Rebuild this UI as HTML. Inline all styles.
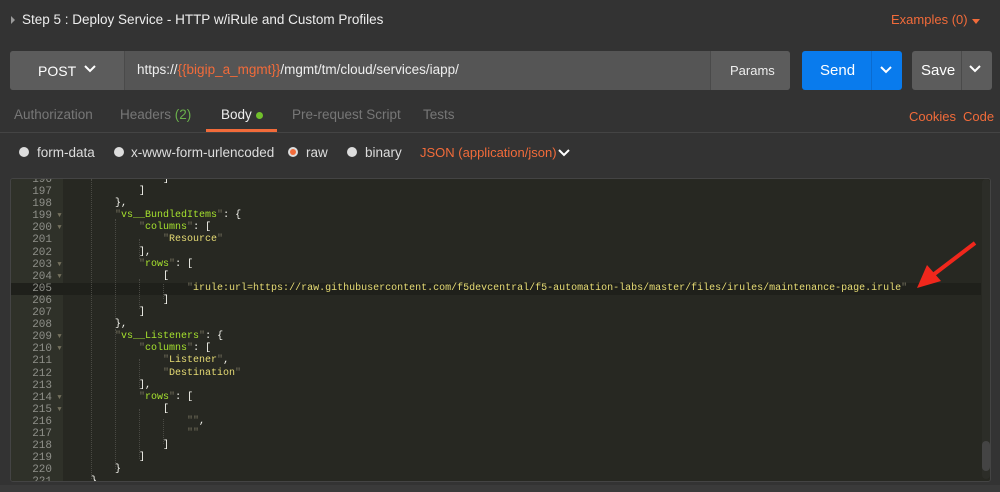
<!DOCTYPE html>
<html><head><meta charset="utf-8"><style>
*{margin:0;padding:0;box-sizing:border-box}
body{width:1000px;height:492px;background:#333;overflow:hidden;position:relative;font-family:"Liberation Sans",sans-serif;color:#fff}
.a{position:absolute}
.t{font-size:13px;white-space:nowrap}
.or{color:#f26b3a}
#ed{left:10px;top:178px;width:981px;height:304px;background:#272822;border:1px solid #444;border-radius:3px;overflow:hidden}
#gut{left:0;top:0;width:52px;height:100%;background:#2f3129}
#code{left:0;top:-5px;font-family:"Liberation Mono",monospace;font-size:10px;line-height:12.1px;white-space:pre;color:#f8f8f2}
.ln{display:inline-block;width:41px;text-align:right;color:#8f908a;font-size:11px;line-height:12.1px;vertical-align:top}
.fd{display:inline-block;width:15px;color:#75715e;font-size:7px;text-align:center;line-height:12.1px;vertical-align:top}
.k{color:#a6e22e}.s{color:#e6db74}.q{color:#75715e}
.hl{position:absolute;left:0;width:970px;height:12px;background:#1f201b}
.g{position:absolute;border-left:1px dotted #4a4a44}
</style></head><body>
<div class="a" style="left:11px;top:16px;width:0;height:0;border-top:4px solid transparent;border-bottom:4px solid transparent;border-left:4px solid #999"></div>
<div class="a t" style="left:22px;top:12px;font-size:13.5px;color:#eee">Step 5 : Deploy Service - HTTP w/iRule and Custom Profiles</div>
<div class="a t or" style="left:891px;top:12px">Examples (0)</div>
<div class="a" style="left:972px;top:19px;border-left:4px solid transparent;border-right:4px solid transparent;border-top:5px solid #f26b3a"></div>

<div class="a" style="left:10px;top:51px;width:780px;height:39px;background:#555;border-radius:3px"></div>
<div class="a" style="left:10px;top:51px;width:115px;height:39px;background:#5c5c5c;border-radius:3px 0 0 3px;border-right:1px solid #4a4a4a"></div>
<div class="a t" style="left:38px;top:63px;font-size:14px">POST</div>
<svg class="a" style="left:83px;top:64px" width="14" height="10"><path d="M2 2l5 5 5-5" stroke="#fff" stroke-width="2" fill="none"/></svg>
<div class="a t" style="left:137px;top:62px;color:#eee;font-size:13.5px">https://<span class="or">{{bigip_a_mgmt}}</span>/mgmt/tm/cloud/services/iapp/</div>
<div class="a" style="left:710px;top:51px;width:80px;height:39px;background:#5c5c5c;border-left:1px solid #4a4a4a;border-radius:0 3px 3px 0"></div>
<div class="a t" style="left:730px;top:63px;color:#eee">Params</div>
<div class="a" style="left:802px;top:51px;width:100px;height:39px;background:#097bed;border-radius:3px"></div>
<div class="a" style="left:871px;top:51px;width:1px;height:39px;background:#0a6bd0"></div>
<div class="a t" style="left:820px;top:62px;font-size:15px">Send</div>
<svg class="a" style="left:879px;top:65px" width="14" height="10"><path d="M2 2l5 5 5-5" stroke="#fff" stroke-width="2" fill="none"/></svg>
<div class="a" style="left:912px;top:51px;width:80px;height:39px;background:#5c5c5c;border-radius:3px"></div>
<div class="a" style="left:961px;top:51px;width:1px;height:39px;background:#4a4a4a"></div>
<div class="a t" style="left:921px;top:62px;font-size:15px">Save</div>
<svg class="a" style="left:968px;top:64px" width="14" height="10"><path d="M2 2l5 5 5-5" stroke="#fff" stroke-width="2" fill="none"/></svg>

<div class="a t" style="left:14px;top:107px;color:#777;font-size:13.5px">Authorization</div>
<div class="a t" style="left:120px;top:107px;color:#777;font-size:13.5px">Headers <span style="color:#6ab04c">(2)</span></div>
<div class="a t" style="left:221px;top:107px;color:#eee;font-size:13.5px">Body</div>
<div class="a" style="left:256px;top:112px;width:7px;height:7px;border-radius:50%;background:#71c02b"></div>
<div class="a" style="left:206px;top:129px;width:71px;height:3px;background:#f26b3a"></div>
<div class="a t" style="left:292px;top:107px;color:#777;font-size:13.5px">Pre-request Script</div>
<div class="a t" style="left:423px;top:107px;color:#777;font-size:13.5px">Tests</div>
<div class="a t or" style="left:909px;top:109px">Cookies</div>
<div class="a t or" style="left:963px;top:109px">Code</div>
<div class="a" style="left:0;top:132px;width:1000px;height:1px;background:#444"></div>

<div class="a" style="left:19px;top:147px;width:10px;height:10px;border-radius:50%;background:#ddd"></div>
<div class="a t" style="left:37px;top:145px;color:#ddd;font-size:13.5px">form-data</div>
<div class="a" style="left:114px;top:147px;width:10px;height:10px;border-radius:50%;background:#ddd"></div>
<div class="a t" style="left:131px;top:145px;color:#ddd;font-size:13.5px">x-www-form-urlencoded</div>
<div class="a" style="left:288px;top:147px;width:10px;height:10px;border-radius:50%;background:#ddd"></div>
<div class="a" style="left:290px;top:149px;width:6px;height:6px;border-radius:50%;background:#f26b3a"></div>
<div class="a t" style="left:306px;top:145px;color:#ddd;font-size:13.5px">raw</div>
<div class="a" style="left:347px;top:147px;width:10px;height:10px;border-radius:50%;background:#ddd"></div>
<div class="a t" style="left:365px;top:145px;color:#ddd;font-size:13.5px">binary</div>
<div class="a t or" style="left:420px;top:145px">JSON (application/json)</div>
<svg class="a" style="left:557px;top:148px" width="14" height="10"><path d="M2 2l5 5 5-5" stroke="#fff" stroke-width="2" fill="none"/></svg>

<div id="ed" class="a">
<div id="gut" class="a"></div>
<div class="hl" style="top:104px"></div>
<div class="g" style="left:80px;top:0;height:300px"></div>
<div class="g" style="left:104px;top:40px;height:100px"></div>
<div class="g" style="left:104px;top:150px;height:140px"></div>
<div class="g" style="left:128px;top:60px;height:20px"></div>
<div class="g" style="left:128px;top:100px;height:30px"></div>
<div class="g" style="left:128px;top:180px;height:30px"></div>
<div class="g" style="left:128px;top:230px;height:50px"></div>
<div class="g" style="left:152px;top:105px;height:15px"></div>
<div class="g" style="left:152px;top:240px;height:25px"></div>
<div id="code" class="a"><span class="ln">196</span><span class="fd"></span>                ]
<span class="ln">197</span><span class="fd"></span>            ]
<span class="ln">198</span><span class="fd"></span>        },
<span class="ln">199</span><span class="fd">▼</span>        <span class="q">"</span><span class="k">vs__BundledItems</span><span class="q">"</span>: {
<span class="ln">200</span><span class="fd">▼</span>            <span class="q">"</span><span class="k">columns</span><span class="q">"</span>: [
<span class="ln">201</span><span class="fd"></span>                <span class="q">"</span><span class="s">Resource</span><span class="q">"</span>
<span class="ln">202</span><span class="fd"></span>            ],
<span class="ln">203</span><span class="fd">▼</span>            <span class="q">"</span><span class="k">rows</span><span class="q">"</span>: [
<span class="ln">204</span><span class="fd">▼</span>                [
<span class="ln">205</span><span class="fd"></span>                    <span class="q">"</span><span class="s">irule:url=https://raw.githubusercontent.com/f5devcentral/f5-automation-labs/master/files/irules/maintenance-page.irule</span><span class="q">"</span>
<span class="ln">206</span><span class="fd"></span>                ]
<span class="ln">207</span><span class="fd"></span>            ]
<span class="ln">208</span><span class="fd"></span>        },
<span class="ln">209</span><span class="fd">▼</span>        <span class="q">"</span><span class="k">vs__Listeners</span><span class="q">"</span>: {
<span class="ln">210</span><span class="fd">▼</span>            <span class="q">"</span><span class="k">columns</span><span class="q">"</span>: [
<span class="ln">211</span><span class="fd"></span>                <span class="q">"</span><span class="s">Listener</span><span class="q">"</span>,
<span class="ln">212</span><span class="fd"></span>                <span class="q">"</span><span class="s">Destination</span><span class="q">"</span>
<span class="ln">213</span><span class="fd"></span>            ],
<span class="ln">214</span><span class="fd">▼</span>            <span class="q">"</span><span class="k">rows</span><span class="q">"</span>: [
<span class="ln">215</span><span class="fd">▼</span>                [
<span class="ln">216</span><span class="fd"></span>                    <span class="q">""</span>,
<span class="ln">217</span><span class="fd"></span>                    <span class="q">""</span>
<span class="ln">218</span><span class="fd"></span>                ]
<span class="ln">219</span><span class="fd"></span>            ]
<span class="ln">220</span><span class="fd"></span>        }
<span class="ln">221</span><span class="fd"></span>    }</div>
<div class="a" style="left:971px;top:0;width:8px;height:300px;background:#2c2d28;border-radius:4px"></div>
<div class="a" style="left:971px;top:262px;width:8px;height:30px;background:#444;border-radius:4px"></div>
</div>
<svg class="a" style="left:905px;top:235px" width="80" height="60"><line x1="70" y1="8" x2="28" y2="40" stroke="#f0271c" stroke-width="4"/><path d="M12 53 L22 30 L36 46 Z" fill="#f0271c"/></svg>
<div class="a" style="left:0;top:485px;width:1000px;height:7px;background:#3a3a3a"></div>
</body></html>
